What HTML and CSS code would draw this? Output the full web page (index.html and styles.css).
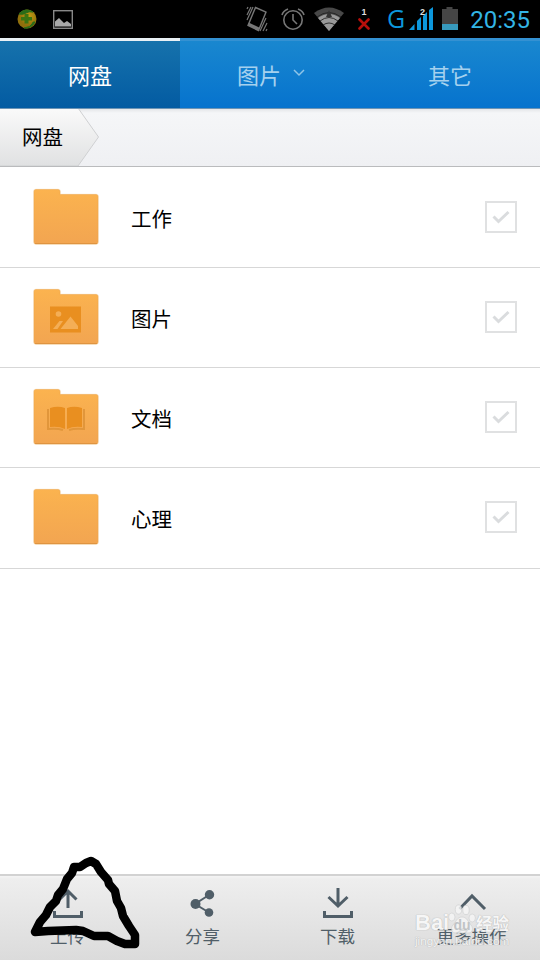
FILE: index.html
```
<!DOCTYPE html>
<html lang="zh-CN">
<head>
<meta charset="utf-8">
<title>网盘</title>
<link rel="stylesheet" href="styles.css">
</head>
<body>
<svg class="defs" width="0" height="0" aria-hidden="true">
  <defs>
    <linearGradient id="folderFill" x2="0" y2="1"><stop stop-color="#fbb34f"/><stop offset="1" stop-color="#f2a551"/></linearGradient>
    <linearGradient id="crumbFill" x2="0" y2="1"><stop stop-color="#fafafa"/><stop offset="1" stop-color="#e0e1e2"/></linearGradient>
    <radialGradient id="ball" cx=".6" cy=".35"><stop stop-color="#c29b13"/><stop offset="1" stop-color="#906f0c"/></radialGradient>
    <symbol id="folder" viewBox="0 0 68 60">
      <path d="M3 2.500h22q2 0 2 2v3h36q2 0 2 2V55q0 2-2 2H3q-2 0-2-2V4.500q0-2 2-2z" fill="none" stroke="#f8ead8" stroke-width="1.600"/>
      <path d="M3 2.500h22q2 0 2 2v3h36q2 0 2 2V55q0 2-2 2H3q-2 0-2-2V4.500q0-2 2-2z" fill="url(#folderFill)" stroke="#eea64b" stroke-width=".5"/>
      <path d="M2 56.500h62" stroke="#df9441"/>
    </symbol>
    <symbol id="check" viewBox="0 0 32 32">
      <rect x="1" y="1" width="30" height="30" fill="#fff" stroke="#e0e1e2" stroke-width="2"/>
      <path d="M8.500 15.500l5 5L23.500 11" fill="none" stroke="#dadcde" stroke-width="3"/>
    </symbol>
  </defs>
</svg>
<header class="status">
  <svg class="s-app" width="20" height="20" viewBox="0 0 20 20"><circle cx="10" cy="10" r="9.500" fill="url(#ball)"/><path d="M2 5Q8-2 16 3q-4-1-7 1T2 5M18 13q-4 7-11 6 7-1 8-4t3-2" fill="#286c18" stroke="#286c18"/><path d="M7.500 5h4v3h3.500v3.500h-3.500v3h-4v-3H4V8h3.500z" fill="#3b7411"/></svg>
  <svg class="s-picture" width="20" height="19" viewBox="0 0 20 19"><rect x=".7" y=".7" width="18.600" height="17.600" fill="#000" stroke="#888" stroke-width="1.400"/><path d="M2 16.500v-5L6 8l5 5 3-2 4 3v2.500z" fill="#aaa"/></svg>
  <svg class="s-vibrate" width="22" height="26" viewBox="0 0 22 26"><g fill="none" stroke="#777" stroke-width="1.400"><path d="M9.500 1.500L20 6 12.500 24.500 2 19.500z"/><path d="M2.500 18l10.500 5" stroke-width="3"/><path d="M1 3l1-2M1 9l4-8M1 14L7 1M14 25l6-13M17 25l4-8M20 25l1-2" stroke-width="1.200"/></g></svg>
  <svg class="s-alarm" width="24" height="24" viewBox="0 0 24 24" fill="none" stroke="#777" stroke-width="1.600"><circle cx="12" cy="13" r="9.200"/><path d="M12 7v6l4 4M1 8q1-4 6-6M17 2q5 2 6 6"/></svg>
  <svg class="s-wifi" width="30" height="24" viewBox="0 0 30 24"><path d="M0 6Q15-5 30 6L15 24z" fill="#484848"/><path d="M4 11Q15 3 26 11L15 24z" fill="#999"/><path d="M3 10Q15 1 27 10M6 14q9-7 18 0M9 18q6-4 12 0" fill="none" stroke="#222" stroke-width=".9"/><path d="M12 10l3-7 3 7z" fill="#333"/></svg>
  <div class="s-sim"><span>1</span><svg width="12" height="12" viewBox="0 0 12 12"><path d="M1.500 1.500l9 9M10.500 1.500l-9 9" stroke="#b80f0b" stroke-width="2.600" stroke-linecap="round"/></svg></div>
  <span class="s-g">G</span>
  <div class="s-signal"><svg width="24" height="24" viewBox="0 0 24 24" fill="#0c97dc"><path d="M0 23l5.500-6v6zM8 14l4-4v13H8zM14 9l4-4v18h-4zM20 3l4-3v23h-4z"/></svg><span>2</span></div>
  <svg class="s-battery" width="16" height="24" viewBox="0 0 16 24"><path d="M0 2h4.500V0h6v2H16v15H0z" fill="#454545"/><path d="M0 17h16v6H0z" fill="#3799bc"/></svg>
  <time>20:35</time>
</header>
<nav class="tabs">
  <a class="tab active">网盘</a>
  <a class="tab"><span>图片</span><svg width="12" height="8" viewBox="0 0 12 8"><path d="M1 1l5 5 5-5" fill="none" stroke="#8fc5e8" stroke-width="1.500"/></svg></a>
  <a class="tab">其它</a>
</nav>
<div class="crumbs">
  <div class="crumb"><svg width="100" height="57" viewBox="0 0 100 57"><path d="M-1-1H78L98.500 28 78 57H-1z" fill="url(#crumbFill)" stroke="#cfd0d2"/></svg><span>网盘</span></div>
</div>
<main class="list">
  <div class="row"><svg class="folder" viewBox="0 0 68 60"><use href="#folder"/></svg><span class="name">工作</span><svg class="check"><use href="#check"/></svg></div>
  <div class="row"><svg class="folder" viewBox="0 0 68 60"><use href="#folder"/><path d="M17 19.500h31v26H17z" fill="#e98f20"/><circle cx="25.500" cy="27" r="2.800" fill="#f4ae56"/><path d="M20 42l6.500-8h3.500l-5.500 8zM27.500 42l10-12.500 7.500 9.500v3z" fill="#f4ae56"/></svg><span class="name">图片</span><svg class="check"><use href="#check"/></svg></div>
  <div class="row"><svg class="folder" viewBox="0 0 68 60"><use href="#folder"/><path d="M17 21q8-2.500 15 0V42q-6-3-15-2zM34 21q7-2.500 15 0V40q-9-1-15 2z" fill="#e98f20"/><path d="M15 22v20q9-1 15 1M51 22v20q-9-1-15 1" fill="none" stroke="#e1963b" stroke-width="2"/></svg><span class="name">文档</span><svg class="check"><use href="#check"/></svg></div>
  <div class="row last"><svg class="folder" viewBox="0 0 68 60"><use href="#folder"/></svg><span class="name">心理</span><svg class="check"><use href="#check"/></svg></div>
</main>
<footer class="actions">
  <a class="action"><svg width="32" height="32" viewBox="0 0 32 32"><path d="M16 20V4M7.500 11.500L16 3l8.500 8.500M2.500 23v5.500h27V23" /></svg><span>上传</span></a>
  <a class="action"><svg width="32" height="32" viewBox="0 0 32 32"><path d="M22 7L8 16l14 8.500" stroke-width="2"/><g fill="#505e68" stroke="none"><circle cx="22.500" cy="6.800" r="4.700"/><circle cx="8.500" cy="16" r="5"/><circle cx="22" cy="24.500" r="4.300"/></g></svg><span>分享</span></a>
  <a class="action"><svg width="32" height="32" viewBox="0 0 32 32"><path d="M16 0v17M6.500 9l9.500 9 9.500-9M2.500 23v5.500h27V23"/></svg><span>下载</span></a>
  <a class="action"><svg width="32" height="32" viewBox="0 0 32 32"><path d="M3.500 21L16 8l13 13"/></svg><span>更多操作</span></a>
</footer>
<div class="watermark">
  <div class="brand">
    <span class="latin">Bai</span>
    <div class="paw">
      <svg width="28" height="31" viewBox="0 0 28 31"><g fill="#f6f6f6" stroke="#c8cacb" stroke-width=".6"><ellipse cx="3.800" cy="13" rx="3.200" ry="4"/><ellipse cx="10.500" cy="5.500" rx="3.200" ry="4.600"/><ellipse cx="18" cy="6" rx="3.200" ry="4.600"/><ellipse cx="24.200" cy="14" rx="3.200" ry="4"/><path d="M14 13c5 0 6 5 9 8 3 4 1 8-3 8H8c-4 0-6-4-3-8 3-3 4-8 9-8z"/></g></svg>
      <span>du</span>
    </div>
    <span class="cn">经验</span>
  </div>
  <div class="site">jingyan.baidu.com</div>
</div>
<svg class="scribble" width="112" height="96" viewBox="0 0 112 96"><path d="M6 77L11 67 17 60 21 52 27 46 29 40 34 34 38 24 43 18 45 12 51 12 57 8 62 6 67 9 72 17 79 25 80 29 86 36 88 46 92 53 94 61 100 71 106 80 106 89 96 89 88 86 79 81 65 81 54 76 47 75 19 76z" fill="none" stroke="#000" stroke-width="8.500" stroke-linecap="round" stroke-linejoin="round"/></svg>
</body>
</html>
```
FILE: styles.css
```
* { box-sizing: border-box; }
body {
  margin: 0;
  width: 540px;
  height: 960px;
  display: flex;
  flex-direction: column;
  position: relative;
  overflow: hidden;
  background: #fff;
  color: #111;
  font-family: Roboto, "Noto Sans CJK SC", sans-serif;
}
svg { display: block; flex: none; }
.defs { position: absolute; }

.status { height: 38px; flex: none; display: flex; align-items: center; padding: 0 10px 0 17px; background: #000; }
.s-picture { margin-left: 16px; }
.s-vibrate { margin-left: 173px; }
.s-alarm { margin-left: 13px; }
.s-wifi { margin-left: 9px; margin-top: -1px; }
.s-sim { width: 12px; margin-left: 14px; display: flex; flex-direction: column; align-items: center; margin-top: -1px; }
.s-sim span, .s-signal span { color: #ddd; font: bold 9px/9px "Liberation Sans", sans-serif; }
.s-sim svg { margin-top: 1px; }
.s-g { margin-left: 17px; width: 17px; margin-top: -2px; color: #0c97dc; font: 25px/38px "Open Sans", sans-serif; }
.s-signal { position: relative; margin-left: 5px; margin-top: -1px; }
.s-signal span { position: absolute; left: 11px; top: 1px; }
.s-battery { margin-left: 9px; margin-top: -1px; }
.status time { margin-left: auto; padding-top: 2px; color: #33b5e5; font-size: 24px; }

.tabs { height: 71px; flex: none; display: grid; grid-template-columns: repeat(3, 1fr); background: linear-gradient(#1a88cf, #0673ce); border-bottom: 1px solid #6d94b5; }
.tab { display: flex; align-items: center; justify-content: center; gap: 12px; padding: 0 0 2px; border-top: 3px solid #3491d2; color: #a5d1ee; font-size: 22px; }
.tab svg { margin-top: -2px; }
.tab span { padding-left: 2px; }
.tab.active { background: linear-gradient(#1672ac, #035ba2); border-top-color: #e9f0f5; color: #fff; }

.crumbs { height: 58px; flex: none; background: linear-gradient(#e4e6e9, #f5f6f8 4px, #eff0f3); border-bottom: 1px solid #babbbd; }
.crumb { display: grid; width: 100px; height: 57px; }
.crumb svg, .crumb span { grid-area: 1 / 1; }
.crumb span { align-self: center; padding: 0 0 3px 22px; font-size: 20.500px; color: #000; }

.list { flex: 1; }
.row { display: flex; align-items: center; height: 101px; padding: 0 23px 0 33px; border-bottom: 1px solid #d7d7d7; color: #000; }
.row + .row { height: 100px; padding-bottom: 1px; }
.row + .row.last { height: 101px; padding-bottom: 2px; }
.folder { width: 68px; height: 60px; }
.name { margin-left: 30px; font-size: 20.500px; padding-top: 1px; }
.check { width: 32px; height: 32px; margin-left: auto; }

.actions { height: 86px; flex: none; display: grid; grid-template-columns: repeat(4, 1fr); border-top: 2px solid #d2d2d2; background: linear-gradient(#f4f4f4, #eee 3px, #dbdbdb); }
.action { display: flex; flex-direction: column; align-items: center; padding-top: 12px; color: #505e68; font-size: 17.500px; line-height: 26px; }
.action svg { fill: none; stroke: #505e68; stroke-width: 3; }
.action span { margin-top: 4px; white-space: nowrap; }
.action:last-child { padding-right: 2px; }

.watermark { position: absolute; left: 415px; top: 902px; width: 100px; opacity: .82; color: #fafafa; text-shadow: 0 0 1px #aaa, 0 0 1px #bbb; }
.brand { display: flex; align-items: flex-end; height: 33px; }
.latin { width: 33px; font: bold 22px/24px "Liberation Sans", sans-serif; }
.paw { display: grid; width: 28px; justify-items: center; align-items: end; }
.paw svg, .paw span { grid-area: 1 / 1; }
.paw span { color: #b9bdc0; font: bold 14px/19px "Liberation Sans", sans-serif; text-shadow: none; }
.cn { font: bold 16.500px/24px "Noto Sans CJK SC", sans-serif; }
.site { font: 11.700px/12px "Liberation Sans", sans-serif; }
.scribble { position: absolute; left: 29px; top: 855px; }
```
